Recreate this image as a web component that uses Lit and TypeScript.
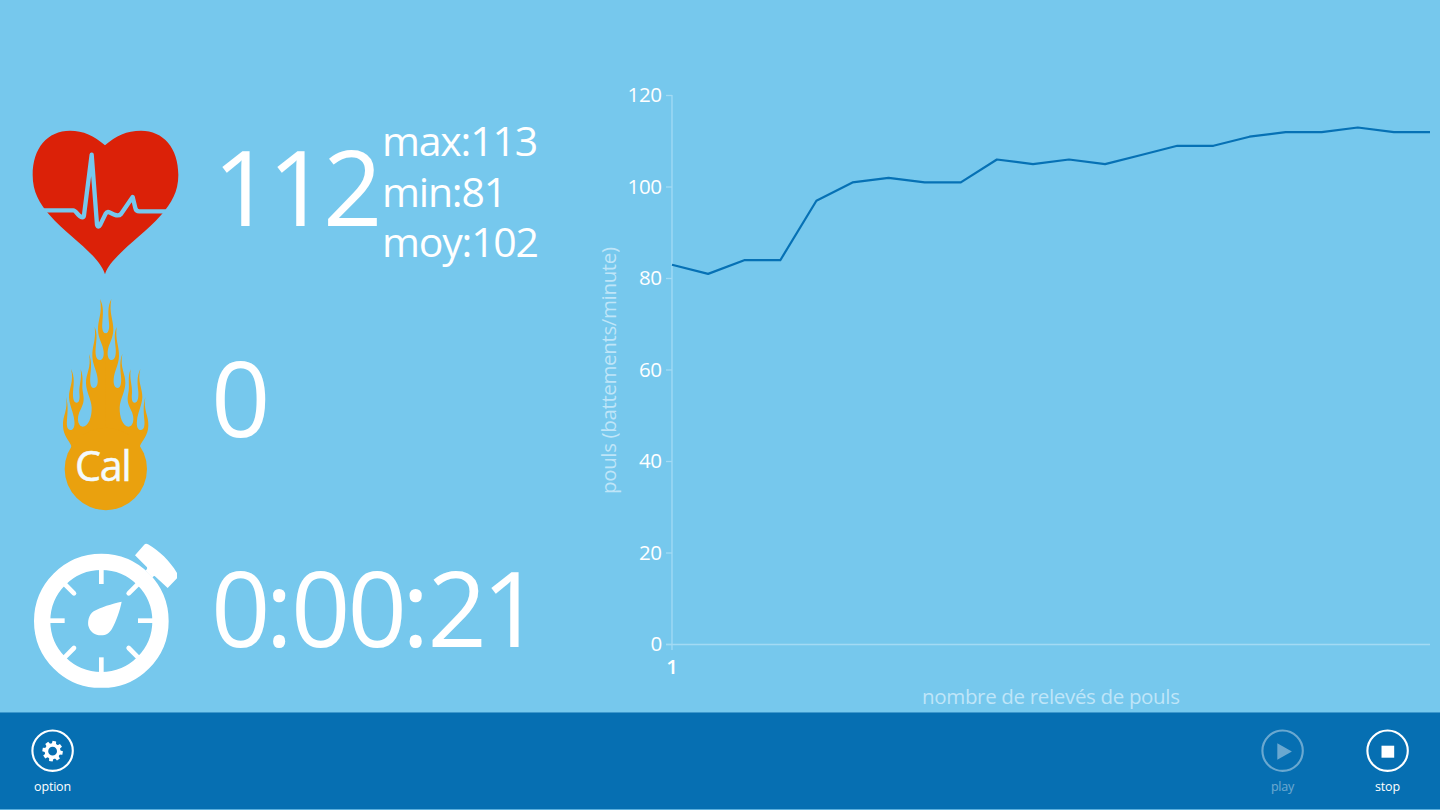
import {LitElement, html, svg, css} from 'lit';
import {customElement, property} from 'lit/decorators.js';

@customElement('pulse-chart')
export class PulseChart extends LitElement {
  @property({type: Array}) values: number[] = [];

  static styles = css`
    :host {
      display: block;
    }
    svg {
      display: block;
      width: 860px;
      height: 712px;
    }
    text {
      font-family: 'Open Sans', 'Noto Sans', sans-serif;
      font-size: 20.5px;
      fill: #fff;
    }
    .axis {
      stroke: #a3daf4;
      stroke-width: 1.3;
    }
    .first {
      font-weight: 600;
    }
    .title {
      font-size: 20.5px;
      fill: #bfe5f8;
    }
    .line {
      fill: none;
      stroke: #0671b5;
      stroke-width: 2.2;
      stroke-linejoin: round;
    }
  `;

  // plot area : x 92..850, y 95.5 (120) .. 644.5 (0)
  toY(value: number) {
    return 644.5 - value * 4.575;
  }

  get points() {
    const step = 758 / (this.values.length - 1);
    return this.values
      .map((v, i) => `${(92 + i * step).toFixed(1)},${this.toY(v).toFixed(1)}`)
      .join(' ');
  }

  render() {
    const ticks = [0, 20, 40, 60, 80, 100, 120];
    return html`
      <svg viewBox="0 0 860 712">
        <line class="axis" x1="92" y1="95" x2="92" y2="650"></line>
        <line class="axis" x1="86" y1="644.5" x2="850" y2="644.5"></line>
        ${ticks.map((t) => {
          const y = this.toY(t);
          const width = String(t).length * 11.5;
          return svg`
            <line class="axis" x1="86" y1=${y} x2="92" y2=${y}></line>
            <text x=${82 - width} y=${y + 6.6} textLength=${width}>${t}</text>
          `;
        })}
        <text class="first" x="92" y="673.5" text-anchor="middle">1</text>
        <text class="title" x="342" y="704" textLength="258">
          nombre de relevés de pouls
        </text>
        <text class="title" transform="translate(35.5 494) rotate(-90)" textLength="247">
          pouls (battements/minute)
        </text>
        <polyline class="line" points=${this.points}></polyline>
      </svg>
    `;
  }
}

@customElement('app-root')
export class AppRoot extends LitElement {
  static styles = css`
    :host {
      display: flex;
      flex-direction: column;
      width: 1440px;
      height: 810px;
      overflow: hidden;
      background-color: #76c8ed;
      color: #fff;
      font-family: 'Open Sans', 'Noto Sans', sans-serif;
    }
    svg {
      display: block;
      flex: none;
    }
    main {
      display: grid;
      grid-template-columns: 580px 860px;
      height: 712px;
    }
    .measures {
      padding: 74.5px 0 0 20px;
    }
    .measure {
      display: flex;
      align-items: flex-start;
      height: 210.5px;
    }
    .icon {
      display: flex;
      justify-content: center;
      width: 170px;
      margin-right: 21px;
    }
    .heart {
      margin-top: 45.5px;
    }
    .flame {
      margin-top: 5px;
    }
    .watch {
      margin-top: 39.5px;
    }
    .flame text {
      font-size: 124px;
      fill: #f4fafc;
      stroke: #f4fafc;
      stroke-width: 1.5;
    }
    .value {
      font-size: 104px;
      line-height: 210px;
      letter-spacing: -2.9px;
      white-space: nowrap;
      margin-top: 6.5px;
    }
    .pulse {
      width: 169px;
      margin-left: 2px;
      letter-spacing: -4.5px;
    }
    .colon {
      letter-spacing: -2px;
      margin-left: -2px;
    }
    .last {
      margin-left: -2px;
    }
    .stats {
      font-size: 41px;
      line-height: 50.5px;
      letter-spacing: -1.2px;
      margin-top: 40.5px;
      white-space: nowrap;
    }
    .bar {
      display: flex;
      justify-content: space-between;
      box-sizing: border-box;
      height: 98px;
      border-top: 1px solid #3c98cd;
      border-bottom: 1px solid #5cb0dd;
      background-color: #066fb2;
    }
    .group {
      display: flex;
    }
    .command {
      display: flex;
      flex-direction: column;
      align-items: center;
      width: 105px;
      padding-top: 16px;
      font-size: 12.5px;
      font-weight: 500;
      line-height: 18px;
      letter-spacing: -0.2px;
    }
    .command svg {
      margin-bottom: 5px;
    }
    .disabled {
      opacity: 0.4;
    }
  `;

  pulses = [
    83, 81, 84, 84, 97, 101, 102, 101, 101, 106, 105, 106, 105, 107, 109, 109,
    111, 112, 112, 113, 112, 112,
  ];

  heart() {
    return html`
      <svg class="heart" width="170" height="165" viewBox="0 0 510 495">
        <path
          fill="#db2108"
          d="M255 76C222 47 190 32 150 32C83 32 38 84 38 165C38 215 58 250 88 284C132 334 185 370 222 411C240 431 250 447 255 463C260 447 270 431 290 411C327 370 380 334 424 284C454 250 475 215 475 165C475 84 430 32 363 32C320 32 288 47 255 76Z"
        />
        <path
          fill="none"
          stroke="#76c8ed"
          stroke-width="13"
          stroke-linejoin="round"
          d="M55 271H160C169 271 173 290 187 292Q191 292 192 286L215 104L231 314Q235 325 241 314L257 281Q262 273 270 278C280 284 296 290 303 282L338 231L346 264Q348 274 358 274H460"
        />
      </svg>
    `;
  }

  flame() {
    // left half, mirrored around x = 167
    const half =
      'M64 468C58 452 40 438 39 408C37 378 55 360 48 321C55 345 53 365 51 390C49 410 53 420 61 420C71 420 75 408 73 392C71 368 58 346 57 322C56 295 73 275 63 237C75 262 71 285 69 305C68 327 72 338 80 338C88 338 90 326 88 308C87 285 96 268 92 238C102 262 95 285 98 303C103 328 102 338 93 356C84 372 82 386 85 397C88 407 93 410 98 410C115 410 126 382 125 352C124 328 109 308 108 280C107 250 125 235 117 192C126 215 123 235 121 258C119 282 123 294 131 294C140 294 144 284 143 268C142 244 128 227 127 198C126 168 139 150 134 111C143 132 139 150 137 175C135 198 140 210 149 210C158 210 162 200 161 185C159 162 145 148 144 120C143 90 158 70 150 27C162 50 159 75 157 98C155 120 160 130 168 130V520H64Z';
    return html`
      <svg class="flame" width="110" height="230" viewBox="0 0 330 690">
        <g fill="#eaa10e">
          <path d=${half} />
          <path d=${half} transform="matrix(-1 0 0 1 334 0)" />
          <circle cx="167.5" cy="537" r="123.5" />
        </g>
        <text x="75" y="574" textLength="170">Cal</text>
      </svg>
    `;
  }

  watch() {
    return html`
      <svg class="watch" width="170" height="160" viewBox="0 0 510 480">
        <clipPath id="dial"><path d="M0 0H510V458H0Z" /></clipPath>
        <g clip-path="url(#dial)">
          <circle cx="244" cy="258" r="177.5" fill="none" stroke="#fff" stroke-width="49" />
        </g>
        <g stroke="#fff" stroke-width="14">
          ${[0, 90, 180, 270].map(
            (a) => svg`<path d="M244 95V147" transform="rotate(${a} 244 257)" />`
          )}
        </g>
        <g stroke="#fff" stroke-width="14" stroke-linecap="round">
          ${[45, 135, 225, 315].map(
            (a) => svg`<path d="M244 95V141" transform="rotate(${a} 244 257)" />`
          )}
        </g>
        <path
          fill="#fff"
          d="M305 200C277 206 240 217 221 229C205 240 203 262 205 272C210 291 225 301 243 301C258 301 269 294 276 281C289 257 300 226 305 200Z"
        />
        <path
          fill="#fff"
          d="M345 61L372 30Q377 24 384 28C420 50 448 76 471 114V130L443 159L404 123Q400 122 397 128L376 106Q383 104 381 97Z"
        />
      </svg>
    `;
  }

  glyph(name: string) {
    if (name === 'option') {
      return svg`
        <circle cx="22" cy="22.5" r="6.2" fill="none" stroke="#fff" stroke-width="3.6" />
        ${[0, 1, 2, 3, 4, 5, 6, 7].map(
          (i) => svg`<path fill="#fff" d="M19.8 16L20.2 12.3H23.8L24.2 16Z" transform="rotate(${i * 45 + 10} 22 22.5)" />`
        )}
      `;
    }
    if (name === 'play') {
      return svg`<path fill="#fff" d="M16.7 14.5L31.3 22.7L16.7 31Z" />`;
    }
    return svg`<path fill="#fff" d="M15.9 17H28.6V29H15.9Z" />`;
  }

  command(name: string, disabled = false) {
    return html`
      <div class="command ${disabled ? 'disabled' : ''}">
        <svg width="44" height="44" viewBox="0.4 0.3 44 44">
          <circle cx="22" cy="22" r="20.2" fill="none" stroke="#fff" stroke-width="2.1" />
          ${this.glyph(name)}
        </svg>
        <span>${name}</span>
      </div>
    `;
  }

  render() {
    return html`
      <main>
        <div class="measures">
          <div class="measure">
            <div class="icon">${this.heart()}</div>
            <div class="value pulse">112</div>
            <div class="stats">
              <div>max:113</div>
              <div>min:81</div>
              <div>moy:102</div>
            </div>
          </div>
          <div class="measure">
            <div class="icon">${this.flame()}</div>
            <div class="value">0</div>
          </div>
          <div class="measure">
            <div class="icon">${this.watch()}</div>
            <div class="value">0<span class="colon">:</span>00<span class="colon">:</span>2<span class="last">1</span></div>
          </div>
        </div>
        <pulse-chart .values=${this.pulses}></pulse-chart>
      </main>
      <div class="bar">
        <div class="group">${this.command('option')}</div>
        <div class="group">
          ${this.command('play', true)} ${this.command('stop')}
        </div>
      </div>
    `;
  }
}
